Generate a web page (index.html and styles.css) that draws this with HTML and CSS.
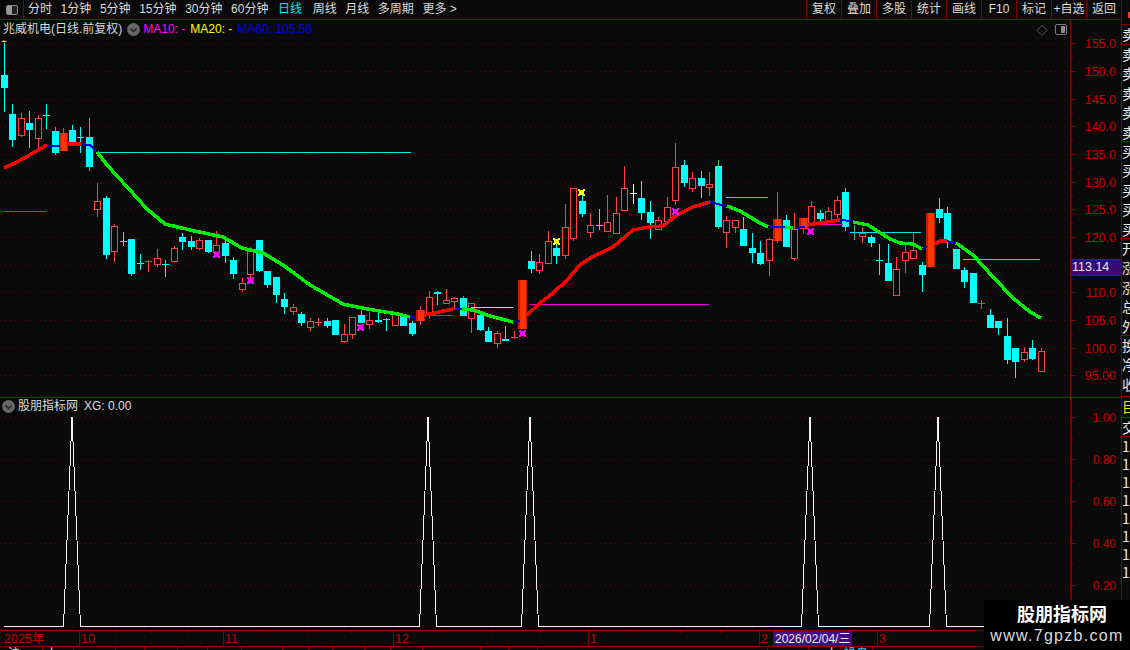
FILE: index.html
```html
<!DOCTYPE html>
<html lang="zh-CN">
<head>
<meta charset="utf-8">
<title>兆威机电 日线</title>
<link rel="stylesheet" href="styles.css">
</head>
<body>
<div class="app">
  <div class="left">
    <header class="topbar">
      <div class="layout-btn"><span class="layout-icon"></span></div>
      <nav class="periods">
        <span>分时</span><span>1分钟</span><span>5分钟</span><span>15分钟</span><span>30分钟</span><span>60分钟</span>
        <span class="active">日线</span><span>周线</span><span>月线</span><span>多周期</span><span>更多 &gt;</span>
      </nav>
      <nav class="tools">
        <span>复权</span><span>叠加</span><span>多股</span><span>统计</span><span>画线</span><span>F10</span><span>标记</span><span>+自选</span><span>返回</span>
      </nav>
    </header>

    <section class="pane pane-price">
      <svg class="plot" viewBox="0 20 1070 377" width="1070" height="377">
        <path class="grid" d="M0 43.5H1066M0 71.5H1066M0 99.5H1066M0 126.5H1066M0 154.5H1066M0 182.5H1066M0 209.5H1066M0 237.5H1066M0 265.5H1066M0 292.5H1066M0 320.5H1066M0 348.5H1066M0 375.5H1066"/>
        <g id="candles"></g>
        <path class="lv cyan" d="M97 152.5H411M726 197.5H768M850 232.5H921M963 259.5H1040"/>
        <path class="lv pale" d="M471 307.5H513"/>
        <path class="lv magenta" d="M4 211.5H46M430 315.5H453M530 304.5H709M810 224.5H843"/>
        <polyline class="ma red" points="4,168 17,162 33,153 47,145"/>
        <polyline class="ma blue" points="47,146 60,146"/>
        <polyline class="ma red" points="68,144 81,144"/>
        <polyline class="ma blue" points="81,144 90,145 96,152"/>
        <polyline class="ma green" points="97,152 107,165 128,188 147,209 165,224 190,230 223,237 242,248 263,253 283,265 310,285 343,304 367,309 398,314 410,317"/>
        <polyline class="ma blue" points="410,317 416,318"/>
        <polyline class="ma red" points="425,315 453,309"/>
        <polyline class="ma blue" points="455,309 462,309"/>
        <polyline class="ma green" points="462,309 473,310 490,316 513,322"/>
        <polyline class="ma blue" points="515,322 520,321"/>
        <polyline class="ma red" points="527,315 540,303 553,293 567,280 580,265 590,258 613,247 633,230 648,227 663,226 677,215 693,207 710,202"/>
        <polyline class="ma blue" points="710,202 725,206"/>
        <polyline class="ma green" points="727,206 740,211 760,223 768,227"/>
        <polyline class="ma blue" points="770,227 785,227"/>
        <polyline class="ma green" points="785,227 793,228"/>
        <polyline class="ma blue" points="795,228 805,227"/>
        <polyline class="ma red" points="807,225 840,220"/>
        <polyline class="ma blue" points="840,220 852,221"/>
        <polyline class="ma green" points="853,222 868,225 890,239 900,243 913,244 922,249"/>
        <polyline class="ma blue" points="923,248 927,247"/>
        <polyline class="ma red" points="935,244 940,241 947,241"/>
        <polyline class="ma blue" points="947,241 955,243"/>
        <polyline class="ma green" points="956,243 973,255 993,277 1013,298 1030,312 1041,318"/>
        <g id="marks"></g>
        <path class="tip" d="M1 42q3 -3 6 0z"/>
        <path class="diamond" d="M1042 25.500L1047 30.500L1042 35.500L1037 30.500Z"/>
        <rect class="mini-frame" x="1055.500" y="24.500" width="11" height="10" rx="1.500"/>
        <rect class="mini-fill" x="1061" y="26" width="4" height="7"/>
      </svg>
      <svg class="axis" viewBox="1070 20 51 377" width="51" height="377">
        <path class="axis-line" d="M1070.500 20V397M1070 43.500h6M1070 57.500h3M1070 71.500h6M1070 85.500h3M1070 99.500h6M1070 113.500h3M1070 126.500h6M1070 140.500h3M1070 154.500h6M1070 168.500h3M1070 182.500h6M1070 196.500h3M1070 209.500h6M1070 223.500h3M1070 237.500h6M1070 251.500h3M1070 265.500h6M1070 279.500h3M1070 292.500h6M1070 306.500h3M1070 320.500h6M1070 334.500h3M1070 348.500h6M1070 362.500h3M1070 375.500h6"/>
        <text x="1116" y="48">155.0</text><text x="1116" y="76">150.0</text><text x="1116" y="104">145.0</text><text x="1116" y="131">140.0</text><text x="1116" y="159">135.0</text><text x="1116" y="187">130.0</text><text x="1116" y="214">125.0</text><text x="1116" y="242">120.0</text><text x="1116" y="297">110.0</text><text x="1116" y="325">105.0</text><text x="1116" y="353">100.0</text><text x="1116" y="380">95.00</text>
      </svg>
      <div class="legend">
        <span class="stock">兆威机电(日线.前复权)</span>
        <svg class="chev" viewBox="0 0 13 13" width="13" height="13"><circle cx="6.500" cy="6.500" r="6.500"/><path d="M3.500 5.500L6.500 8.500L9.500 5.500"/></svg>
        <span class="m10">MA10: -</span><span class="m20">MA20: -</span><span class="m60">MA60: 105.56</span>
      </div>
      <div class="price-tag">113.14</div>
    </section>

    <section class="pane pane-ind">
      <svg class="plot" viewBox="0 398 1070 232" width="1070" height="232">
        <path class="grid" d="M0 417.500H1066M0 459.500H1066M0 501.500H1066M0 543.500H1066M0 585.500H1066"/>
        <polyline class="spike" points="4,626.500 63.500,626.500 72,417 80.500,626.500 419.500,626.500 428,417 436.500,626.500 521.500,626.500 530,417 538.500,626.500 801.500,626.500 810,417 818.500,626.500 929.500,626.500 938,417 946.500,626.500 1041,626.500"/>
      </svg>
      <svg class="axis axis-ind" viewBox="1070 398 51 232" width="51" height="232">
        <path class="axis-line thick" d="M1071 398V630"/>
        <path class="axis-line" d="M1071 417.500h5M1071 438.500h2M1071 459.500h5M1071 480.500h2M1071 501.500h5M1071 522.500h2M1071 543.500h5M1071 564.500h2M1071 585.500h5M1071 606.500h2"/>
        <text x="1116" y="422">1.00</text><text x="1116" y="464">0.80</text><text x="1116" y="506">0.60</text><text x="1116" y="548">0.40</text><text x="1116" y="590">0.20</text>
      </svg>
      <div class="legend legend-ind">
        <svg class="chev" viewBox="0 0 13 13" width="13" height="13"><circle cx="6.500" cy="6.500" r="6.500"/><path d="M3.500 5.500L6.500 8.500L9.500 5.500"/></svg>
        <span class="ind-name">股朋指标网</span><span>XG: 0.00</span>
      </div>
    </section>

    <svg class="dates" viewBox="0 630 1121 17" width="1121" height="17">
      <path class="axis-line" d="M0 630.500H1121M0 646.500H1121M79.500 630V646M223.500 630V646M393.500 630V646M588.500 630V646M759.500 630V646M877.500 630V646M1070.500 630V646M115.500 630v3M151.500 630v3M187.500 630v3M266.500 630v3M308.500 630v3M351.500 630v3M442.500 630v3M491.500 630v3M540.500 630v3M634.500 630v3M680.500 630v3M720.500 630v3"/>
      <text x="4" y="643">2025年</text><text x="81" y="643">10</text><text x="225" y="643">11</text><text x="395" y="643">12</text><text x="590" y="643">1</text><text x="761" y="643">2</text><text x="879" y="643">3</text>
      <rect class="date-box" x="773" y="631" width="79" height="15"/>
      <text class="date-now" x="775" y="643">2026/02/04/三</text>
    </svg>

    <svg class="status" viewBox="0 647 1121 3" width="1121" height="3">
      <path class="axis-line" d="M42.500 647V650M73.500 647V650M115.500 647V650M144.500 647V650M177.500 647V650M207.500 647V650M241.500 647V650M282.500 647V650M308.500 647V650M332.500 647V650M364.500 647V650M390.500 647V650M422.500 647V650M480.500 647V650M508.500 647V650M537.500 647V650M767.500 647V650M808.500 647V650M840.500 647V650M872.500 647V650"/>
      <text class="status-text" x="8" y="658">沪</text><text class="status-text" x="46" y="658">上</text><text class="status-text" x="826" y="658">上</text><text class="status-text cyan-text" x="844" y="658">操盘</text>
    </svg>
  </div>

  <aside class="strip">
    <div class="cell cell-top"><span class="flag"></span></div>
    <div class="cell cell-a"><span class="stack">卖</span></div>
    <div class="cell cell-b"><span class="stack">卖卖卖卖卖</span></div>
    <div class="cell cell-b"><span class="stack">买买买买买</span></div>
    <div class="cell cell-b"><span class="stack">开涨涨总外</span></div>
    <div class="cell cell-c"><span class="stack">换净收</span></div>
    <div class="cell cell-y"><span class="stack yellow">目</span></div>
    <div class="cell cell-d"><span class="stack">交</span></div>
    <div class="cell cell-n"><span class="stack">11111111</span></div>
  </aside>
</div>

<div class="watermark">
  <strong>股朋指标网</strong>
  <span>www.7gpzb.com</span>
</div>
<script src="script.js"></script>
</body>
</html>
```

FILE: styles.css
```css
* { box-sizing: border-box; }
html, body { margin: 0; padding: 0; }
body {
  width: 1130px;
  height: 650px;
  overflow: hidden;
  position: relative;
  background: #0a0a0a;
  color: #dcdcdc;
  font-family: "Liberation Sans", "Noto Sans CJK SC", sans-serif;
  font-size: 12px;
}
svg { display: block; }
.app { display: flex; width: 1130px; height: 650px; }
.left { width: 1121px; display: flex; flex-direction: column; }

/* top bar */
.topbar {
  height: 20px;
  display: flex;
  align-items: center;
  border-bottom: 1px solid #800000;
}
.layout-btn {
  width: 24px;
  height: 19px;
  border-right: 1px solid #800000;
  display: flex;
  align-items: center;
  justify-content: center;
}
.layout-icon {
  width: 12px;
  height: 10px;
  border: 1px solid #8a8a8a;
  border-radius: 2px;
  background: linear-gradient(90deg, #9a9a9a 0 55%, #222 55%);
}
.periods { display: flex; gap: 8.600px; margin-left: 4px; line-height: 19px; }
.periods .active { color: #00e5ff; margin: 0 2px 0 1px; }
.tools { display: flex; margin-left: auto; height: 19px; }
.tools span {
  width: 35px;
  border-left: 1px solid #800000;
  text-align: center;
  line-height: 19px;
}

/* panes */
.pane { position: relative; display: flex; }
.pane-price { height: 377px; }
.pane-ind { height: 233px; border-top: 1px solid #800000; }
.grid { fill: none; stroke: #6e0000; stroke-width: 1; stroke-dasharray: 1 4; shape-rendering: crispEdges; }
.axis text, .dates text { fill: #c40000; font-size: 12.500px; font-family: "Liberation Sans", "Noto Sans CJK SC", sans-serif; }
.axis text { text-anchor: end; }
.axis-ind text { font-size: 12px; }
.axis-line { fill: none; stroke: #800000; stroke-width: 1; shape-rendering: crispEdges; }
.thick { stroke-width: 2; }
#candles, #marks { shape-rendering: crispEdges; }
.lv { fill: none; stroke-width: 1; shape-rendering: crispEdges; }
.cyan { stroke: #00e8e8; }
.pale { stroke: #8fe8e8; }
.magenta { stroke: #e000e0; }
.ma { fill: none; stroke-width: 3.500; shape-rendering: crispEdges; stroke-linejoin: round; }
.ma.red { stroke: #ff0000; }
.ma.green { stroke: #00ee00; }
.ma.blue { stroke: #0000e6; stroke-width: 2; }
.spike { fill: none; stroke: #f4f4f4; stroke-width: 1; shape-rendering: crispEdges; }
.tip { fill: #ffee00; }
.diamond { fill: none; stroke: #5a5a5a; stroke-width: 1; }
.mini-frame { fill: none; stroke: #7a7a7a; stroke-width: 1; }
.mini-fill { fill: #8a8a8a; }

/* legends over the plots */
.legend {
  position: absolute;
  left: 3px;
  top: 2px;
  display: flex;
  align-items: center;
  height: 15px;
  line-height: 15px;
  white-space: nowrap;
}
.chev circle { fill: #666; }
.chev path { fill: none; stroke: #222; stroke-width: 1.500; }
.stock { margin-right: 5px; color: #d8d8d8; }
.legend .chev { margin-right: 3px; }
.m10 { color: #ff00ff; margin-right: 5px; }
.m20 { color: #ffff00; margin-right: 5px; }
.m60 { color: #0000e0; }
.legend-ind { left: 2px; top: 1px; }
.legend-ind .chev { margin-right: 3px; }
.ind-name { margin-right: 6px; }
.price-tag {
  position: absolute;
  left: 1071px;
  top: 239px;
  width: 50px;
  height: 17px;
  background: #380a78;
  border-top: 1px solid #800000;
  border-bottom: 1px solid #800000;
  color: #e8e8e8;
  font-size: 12.500px;
  line-height: 15px;
  padding-left: 1px;
}

/* dates and status */
.date-box { fill: #46088a; }
.dates .date-now { fill: #f0f0f0; font-size: 12px; }
.status-text { fill: #e8e8e8; font-size: 12px; font-family: "Noto Sans CJK SC", sans-serif; }
.cyan-text { fill: #00e5ff; }

/* right strip */
.strip {
  width: 9px;
  border-left: 1px solid #800000;
  display: flex;
  flex-direction: column;
  height: 650px;
  overflow: hidden;
}
.cell { overflow: hidden; border-bottom: 1px solid #800000; flex: none; position: relative; }
.cell-top { height: 25px; }
.flag { position: absolute; left: 6px; top: 12px; width: 2px; height: 6px; background: #ff3030; }
.cell-a { height: 20px; }
.cell-b { height: 97px; }
.cell-c { height: 61px; }
.cell-y { height: 21px; }
.cell-d { height: 19px; }
.cell-n { height: 213px; border-bottom: 0; }
.stack {
  display: block;
  width: 14px;
  font-family: "Noto Sans CJK SC", sans-serif;
  font-size: 14px;
  line-height: 19.400px;
  word-break: break-all;
  color: #e8e8e8;
}
.yellow { color: #e8e800; }
.cell-n .stack { line-height: 18px; }

/* watermark over the corner */
.watermark {
  position: absolute;
  left: 984px;
  top: 600px;
  width: 146px;
  height: 50px;
  background: #000;
  color: #fff;
  display: flex;
  flex-direction: column;
  align-items: center;
  font-family: "Noto Sans CJK SC", sans-serif;
}
.watermark strong { font-size: 18px; line-height: 24px; margin: 1px 0 0 10px; }
.watermark span {
  font-family: "Liberation Sans", sans-serif;
  font-size: 16px;
  line-height: 22px;
  letter-spacing: 1.300px;
  color: #dcdcdc;
}
```

FILE: script.js
```js
// Daily bars as [kind, high, bodyTop, bodyBottom, low, wickColour] in chart pixels.
// kind: c = falling (cyan), r = rising (hollow red), R = limit-up (wide solid red), w = doji (white)
var BARS = [
["c",43,75,88,112],["c",104,114,140,147],["r",113,118,135,137],["c",111,123,130,148],["r",115,118,138,148],
["c",104,115,115,129],["c",127,131,153,155,"#40c060"],["R",128,133,151,151,"#e04080"],["c",125,130,142,144],["c",127,137,137,153],
["c",118,137,167,171,"#40c060"],["r",183,201,209,217],["c",196,198,255,259],["r",224,226,251,262],["c",232,241,241,246],
["c",239,239,274,276],["c",254,263,263,270],["r",260,261,261,272],["r",249,258,264,267],["c",260,264,264,277],
["r",246,248,261,263],["c",233,237,242,250],["c",236,241,247,250],["r",238,240,248,250],["c",240,240,252,253],
["r",231,245,252,253],["c",240,243,256,263],["c",257,260,274,279],["r",278,283,289,292],["r",247,251,274,278],
["c",240,240,271,272],["c",271,271,285,288],["c",277,277,295,303],["c",293,299,307,314],["r",304,307,311,315],
["c",312,314,323,326],["r",318,321,327,331],["r",318,322,322,326],["c",318,321,326,328],["c",320,320,335,335],
["r",324,334,341,343],["r",317,317,334,339],["c",311,315,323,323],["r",312,320,324,329],["c",313,320,322,323],
["c",318,319,319,331],["r",314,314,325,325],["c",316,316,326,326],["c",321,323,334,336],["R",306,310,321,325,"#e04080"],
["r",291,297,313,319],["c",291,292,294,305],["r",289,300,303,303],["r",297,298,301,310],["c",296,298,316,316,"#40c060"],
["r",303,303,318,333],["c",315,315,330,331],["c",327,331,342,342],["r",331,333,343,348],["c",326,339,341,341],
["r",331,337,337,339],["R",280,280,329,329],["c",251,261,269,273],["r",254,262,270,274],["r",231,241,263,263],
["c",241,248,256,264],["r",204,227,255,259],["r",188,188,238,241],["c",192,201,214,217],["r",213,225,232,238],
["c",209,225,225,230],["r",195,222,231,231],["r",197,213,233,233],["r",166,188,210,210],["w",184,193,193,204],
["c",181,198,213,220],["c",201,212,223,239],["r",217,220,229,229],["r",197,207,221,221],["r",143,167,200,205],
["c",160,165,183,187],["r",172,178,188,192],["c",171,178,186,198],["r",172,184,187,196],["c",160,166,227,229,"#40c060"],
["r",216,220,232,248],["r",220,220,227,233],["c",217,229,246,246],["c",233,248,253,263],["c",241,253,264,265],
["r",238,239,260,276],["R",192,219,241,243,"#e04080"],["c",215,220,247,247],["r",213,229,258,261],["R",218,218,229,234],
["r",201,206,224,224],["c",210,213,219,222],["r",207,211,222,222],["r",196,200,214,218],["c",188,192,227,231],
["c",225,232,232,240,"#40c060"],["r",227,233,236,243],["c",235,237,243,247],["c",244,260,260,275],["c",244,263,281,281],
["r",257,269,295,295],["r",245,252,260,273],["r",233,250,258,258],["c",262,265,275,292],["R",213,213,267,267],
["c",198,209,218,223],["c",207,213,241,248],["c",249,249,269,269,"#40c060"],["c",267,270,282,288],["c",273,273,303,303],
["r",300,303,303,309],["c",309,315,328,328],["c",321,321,328,335],["c",318,336,360,364],["c",348,348,362,378],
["r",347,352,359,362],["c",340,348,359,360],["r",348,351,371,372]
];

// Signal crosses: [x, y, colour]
var MARKS = [
[216,254,"#ff00ff"],[250,280,"#ff00ff"],[360,327,"#ff00ff"],[522,333,"#ff00ff"],[675,211,"#ff00ff"],[810,231,"#ff00ff"],
[556,241,"#ffff00"],[581,192,"#ffff00"]
];

var NS = "http://www.w3.org/2000/svg";
var COLOURS = { c: "#00ffff", r: "#ff4040", R: "#ff3300", w: "#ffffff" };

function box(parent, x, y, w, h, fill) {
  var el = document.createElementNS(NS, "rect");
  el.setAttribute("x", x);
  el.setAttribute("y", y);
  el.setAttribute("width", w);
  el.setAttribute("height", h);
  el.setAttribute("fill", fill);
  parent.appendChild(el);
}

var layer = document.getElementById("candles");
BARS.forEach(function (b, i) {
  var kind = b[0], hi = b[1], top = b[2], bot = b[3], lo = b[4];
  var px = Math.floor(4.33 + 8.5 * i);
  var col = COLOURS[kind];
  var wick = b[5] || col;
  if (kind === "R") {
    if (hi < top) box(layer, px, hi, 1, top - hi, wick);
    if (lo > bot) box(layer, px, bot, 1, lo - bot, wick);
    box(layer, px - 4, top, 9, bot - top, "#c81800");
    box(layer, px - 2, top, 6, bot - top, "#ff3300");
    return;
  }
  if (top === bot) {
    box(layer, px, hi, 1, lo - hi, wick);
    box(layer, px - 3, top, 7, 1, col);
    return;
  }
  if (kind === "r") {
    box(layer, px, hi, 1, top - hi, wick);
    box(layer, px, bot, 1, lo - bot, wick);
    box(layer, px - 3, top, 7, 1, col);
    box(layer, px - 3, bot, 7, 1, col);
    box(layer, px - 3, top, 1, bot - top, col);
    box(layer, px + 3, top, 1, bot - top + 1, col);
    return;
  }
  box(layer, px, hi, 1, lo - hi, wick);
  box(layer, px - 3, top, 7, bot - top, col);
  if (b[5]) box(layer, px, top, 1, bot - top, "#30e0b8");
});

var marks = document.getElementById("marks");
MARKS.forEach(function (m) {
  var x = m[0], y = m[1], c = m[2];
  box(marks, x - 2, y - 2, 5, 5, c);
  box(marks, x - 3, y - 3, 2, 2, c);
  box(marks, x + 2, y - 3, 2, 2, c);
  box(marks, x - 3, y + 2, 2, 2, c);
  box(marks, x + 2, y + 2, 2, 2, c);
});
```
